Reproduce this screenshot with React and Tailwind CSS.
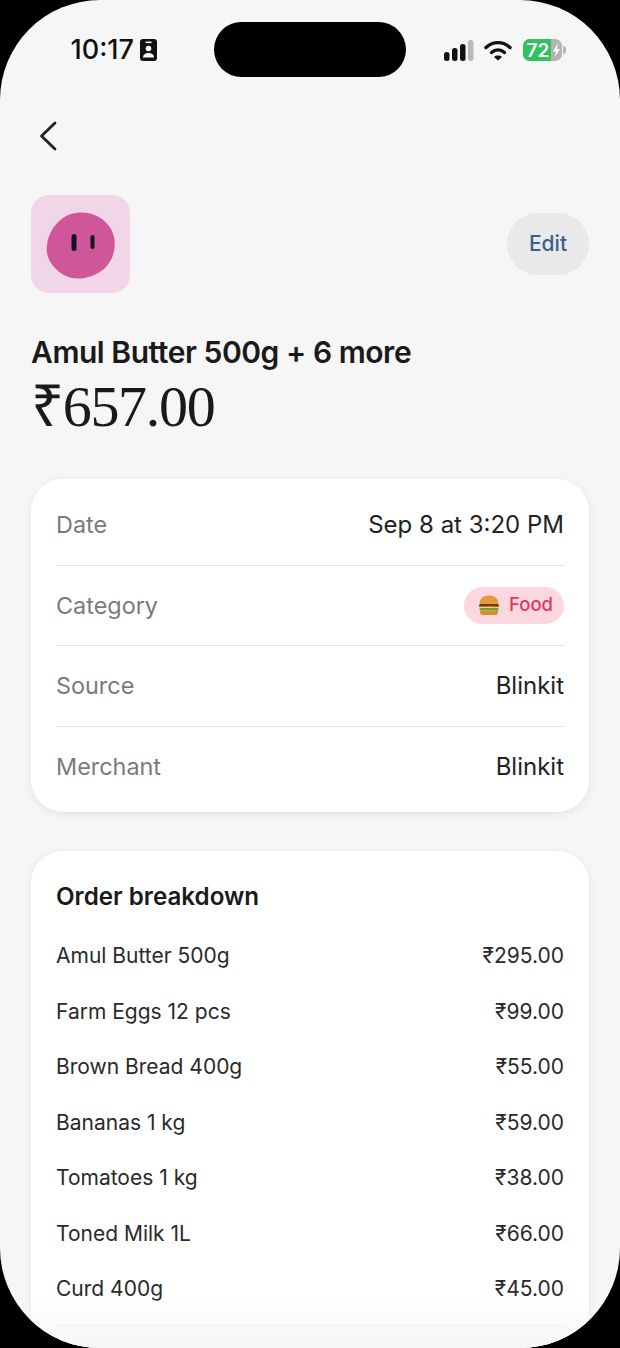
const rows = [
  ["Amul Butter 500g", "₹295.00"],
  ["Farm Eggs 12 pcs", "₹99.00"],
  ["Brown Bread 400g", "₹55.00"],
  ["Bananas 1 kg", "₹59.00"],
  ["Tomatoes 1 kg", "₹38.00"],
  ["Toned Milk 1L", "₹66.00"],
  ["Curd 400g", "₹45.00"],
];

function Burger() {
  return (
    <svg width="22" height="22" viewBox="0 0 22 22">
      <path d="M1.5 10C1.5 4.5 5.5 1.5 11 1.5S20.5 4.5 20.5 10Z" fill="#e8973a" />
      <rect x="1" y="10" width="20" height="3" rx="1.5" fill="#6b3a1e" />
      <path d="M2 12.5h18l-3 2.2-3-1.2H2Z" fill="#f5c518" />
      <rect x="1.5" y="14" width="19" height="2.5" rx="1.2" fill="#6aa32c" />
      <path d="M2 16.5h18v1.5a3 3 0 0 1-3 3H5a3 3 0 0 1-3-3Z" fill="#d98a34" />
    </svg>
  );
}

function Row({ label, children, last }) {
  return (
    <div className={`flex h-[80.5px] items-center justify-between ${last ? "" : "border-b border-[#e6e6e6]"}`}>
      <span className="text-[23.4px] text-[#7a7a7a]">{label}</span>
      {children}
    </div>
  );
}

export default function App() {
  return (
    <div className="h-[1348px] w-[620px] overflow-hidden bg-black" style={{ fontFamily: "Inter, 'Noto Sans', sans-serif" }}>
      <div className="relative flex h-[1348px] flex-col overflow-hidden rounded-[100px] bg-[#f6f6f6] px-[31px]">
        {/* status bar */}
        <div className="-mx-[31px] flex h-[100px] shrink-0 items-start pt-[22px]">
          <div className="flex w-[214px] items-center justify-end gap-[6px] pr-[57px] pt-[13px]">
            <span className="text-[27px] font-medium leading-[30px] tracking-[0px] text-[#111]">10:17</span>
            <svg width="17" height="22" viewBox="0 0 17 22">
              <rect width="17" height="22" rx="3" fill="#111" />
              <rect x="5.5" y="2.5" width="6" height="1.6" fill="#f6f6f6" />
              <circle cx="8.5" cy="9.5" r="2.8" fill="#f6f6f6" />
              <path d="M3 18.5c0-3 2.5-4.6 5.5-4.6s5.500 1.600 5.500 4.600Z" fill="#f6f6f6" />
            </svg>
          </div>
          <div className="h-[55px] w-[192px] rounded-full bg-black" />
          <div className="flex flex-1 items-center gap-[10px] pl-[38px] pt-[17px]">
            <svg width="30" height="21" viewBox="0 0 30 21">
              <rect x="0" y="12" width="5.500" height="9" rx="2.500" fill="#111" />
              <rect x="8" y="8" width="5.500" height="13" rx="2.500" fill="#111" />
              <rect x="16" y="4" width="5.500" height="17" rx="2.500" fill="#111" />
              <rect x="24" y="0" width="5.500" height="21" rx="2.500" fill="#b9b9b9" />
            </svg>
            <svg width="28" height="21" viewBox="0 0 28 21" fill="none" stroke="#111" strokeWidth="3.400" strokeLinecap="round">
              <path d="M2 7.500C9 1 19 1 26 7.500" />
              <path d="M7.500 12.500c4-3.500 9-3.500 13 0" />
              <path d="M14 20.500l-4-3.600c2.300-1.800 5.700-1.800 8 0Z" fill="#111" stroke="none" />
            </svg>
            <div className="ml-[1px] flex items-center">
              <div className="flex h-[22px] w-[39px] overflow-hidden rounded-[7px] bg-[#b4b4b4]">
                <div className="flex w-[28px] items-center justify-center bg-[#2fc25f] pl-[2px] text-[19px] font-semibold leading-none text-white">72</div>
                <svg width="11" height="22" viewBox="0 0 11 22">
                  <path d="M7 4 2 12.500h3L4 18l5-8H6Z" fill="#fff" />
                </svg>
              </div>
              <div className="ml-[1px] h-[8px] w-[2.500px] rounded-r-full bg-[#b4b4b4]" />
            </div>
          </div>
        </div>

        {/* back */}
        <div className="flex h-[95px] shrink-0 items-start pl-[8px] pt-[21px]">
          <svg width="20" height="30" viewBox="0 0 20 30" fill="none" stroke="#222" strokeWidth="2.800" strokeLinecap="round" strokeLinejoin="round">
            <path d="M16 2 2.500 15 16 28" />
          </svg>
        </div>

        {/* icon + edit */}
        <div className="flex h-[98px] shrink-0 items-center justify-between">
          <div className="flex h-[98px] w-[99px] items-center justify-center rounded-[18px] bg-[#f0d6e6] pt-[4px]">
            <svg width="70" height="68" viewBox="0 0 70 68">
              <path d="M30 1C44-1 58 5 65 17c7 13 4 30-7 40C47 66 30 70 18 63 6 56-1 45 1 33 3 17 15 3 30 1Z" fill="#cf5698" />
              <rect x="25.500" y="22" width="5" height="17" rx="2.500" fill="#17111a" />
              <rect x="44.500" y="23" width="4" height="14" rx="2" fill="#17111a" />
            </svg>
          </div>
          <div className="flex h-[62px] w-[82px] items-center justify-center rounded-[31px] bg-[#e9e9e9] text-[21px] font-medium text-[#36608f]">Edit</div>
        </div>

        {/* title */}
        <div className="mt-[41px] shrink-0 text-[30px] font-semibold leading-[36px] tracking-[-0.45px] text-[#1a1a1a]">Amul Butter 500g + 6 more</div>
        <div className="mt-[5px] shrink-0 text-[58px] leading-[64px] tracking-[-1.300px] text-[#1a1a1a]" style={{ fontFamily: "'Liberation Serif', serif" }}>₹657.00</div>

        {/* details */}
        <div className="mt-[40px] shrink-0 rounded-[32px] bg-white px-[25px] pb-[5px] pt-[6px] shadow-[0_2px_8px_rgba(0,0,0,0.08)]">
          <Row label="Date"><span className="text-[24px] text-[#222]">Sep 8 at 3:20 PM</span></Row>
          <Row label="Category">
            <div className="flex h-[37px] w-[100px] items-center gap-[9px] rounded-full bg-[#fbd7df] pl-[14px]">
              <Burger />
              <span className="text-[18.500px] font-medium text-[#e5355f]">Food</span>
            </div>
          </Row>
          <Row label="Source"><span className="text-[24px] text-[#222]">Blinkit</span></Row>
          <Row label="Merchant" last><span className="text-[24px] text-[#222]">Blinkit</span></Row>
        </div>

        {/* order */}
        <div className="mt-[39px] shrink-0 rounded-t-[32px] bg-white px-[25px] pt-[29px] shadow-[0_2px_8px_rgba(0,0,0,0.08)]">
          <div className="text-[24.2px] font-semibold leading-[34px] text-[#1a1a1a]">Order breakdown</div>
          <div className="mt-[14px] border-b border-[#e8e8e8] pb-[8px]">
            {rows.map(([name, price]) => (
              <div key={name} className="flex h-[55.500px] items-center justify-between text-[21px] text-[#2a2a2a]">
                <span>{name}</span>
                <span>{price}</span>
              </div>
            ))}
          </div>
          <div className="h-[100px]" />
        </div>

        {/* bottom fade */}
        <div className="absolute inset-x-0 bottom-0 h-[50px] bg-gradient-to-b from-[#f6f6f6]/0 to-[#f6f6f6]" />
      </div>
    </div>
  );
}
